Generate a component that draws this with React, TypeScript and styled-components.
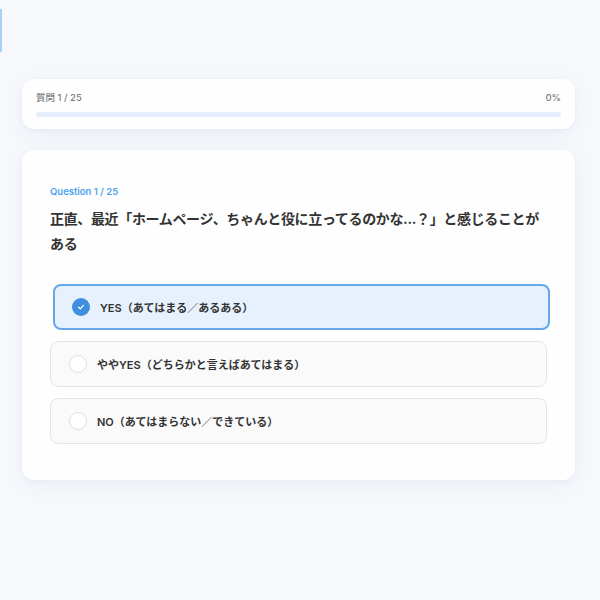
import React from "react";
import styled, { createGlobalStyle } from "styled-components";

const GlobalStyle = createGlobalStyle`
  html, body {
    margin: 0;
    padding: 0;
    background: #f6f8fb;
  }
  body {
    font-family: "Inter", "Noto Sans CJK JP", sans-serif;
    color: #333;
  }
  * { box-sizing: border-box; }
`;

const Page = styled.div`
  width: 600px;
  height: 600px;
  background: #f6f8fb;
  display: flex;
  flex-direction: column;
  overflow: hidden;
`;

const EdgeMark = styled.div`
  width: 2px;
  height: 43px;
  margin-top: 9px;
  background: #a9d1f7;
`;

const Main = styled.main`
  display: flex;
  flex-direction: column;
  gap: 21px;
  width: 553px;
  margin: 27px 0 0 22px;
`;

const Card = styled.section`
  background: #fefefe;
  border-radius: 12px;
  box-shadow: 0 4px 18px rgba(110, 140, 200, 0.1), 0 1px 3px rgba(110, 140, 200, 0.06);
`;

const ProgressCard = styled(Card)`
  height: 50px;
  padding: 13px 14px 0 14px;
  display: flex;
  flex-direction: column;
  gap: 8px;
`;

const ProgressRow = styled.div`
  display: flex;
  justify-content: space-between;
  align-items: center;
  font-size: 9.5px;
  font-weight: 500;
  color: #808080;
  line-height: 12px;
`;

const Track = styled.div`
  height: 5px;
  border-radius: 3px;
  background: #e5effb;
  overflow: hidden;
`;

const Fill = styled.div`
  height: 100%;
  background: #4a9cea;
`;

const QuestionCard = styled(Card)`
  padding: 36px 28px 36px 28px;
  display: flex;
  flex-direction: column;
`;

const Eyebrow = styled.div`
  font-size: 9.5px;
  font-weight: 600;
  color: #4ba3ee;
  line-height: 12px;
  margin-bottom: 8px;
`;

const Title = styled.h2`
  margin: 0 0 28px 0;
  font-size: 14px;
  font-weight: 700;
  line-height: 25px;
  color: #333;
  letter-spacing: -0.35px;
`;

const Options = styled.div`
  display: flex;
  flex-direction: column;
  gap: 11px;
`;

const Option = styled.button<{ $selected?: boolean }>`
  all: unset;
  box-sizing: border-box;
  display: flex;
  align-items: center;
  gap: 10px;
  height: 46px;
  padding: 0 ${(p) => (p.$selected ? "17px" : "18px")};
  border-radius: 8px;
  border: ${(p) => (p.$selected ? "2px solid #64a8ea" : "1.5px solid #e3e4e6")};
  background: ${(p) => (p.$selected ? "#e6f1fd" : "#fafafb")};
  transform: ${(p) => (p.$selected ? "translateX(3px)" : "none")};
  font-family: "Inter", "Noto Sans CJK JP", sans-serif;
  font-size: 11px;
  font-weight: 600;
  color: #333;
  cursor: pointer;
`;

const Radio = styled.span<{ $selected?: boolean }>`
  flex: 0 0 auto;
  width: 18px;
  height: 18px;
  border-radius: 50%;
  display: flex;
  align-items: center;
  justify-content: center;
  background: ${(p) => (p.$selected ? "#3f8fe0" : "#fff")};
  border: ${(p) => (p.$selected ? "none" : "1.5px solid #dedfe1")};
`;

const options = [
  "YES（あてはまる／あるある）",
  "ややYES（どちらかと言えばあてはまる）",
  "NO（あてはまらない／できている）",
];

export default function App() {
  const selected = 0;
  const progress = 0;
  return (
    <Page>
      <GlobalStyle />
      <EdgeMark />
      <Main>
        <ProgressCard>
          <ProgressRow>
            <span>質問 1 / 25</span>
            <span>{progress}%</span>
          </ProgressRow>
          <Track>
            <Fill style={{ width: `${progress}%` }} />
          </Track>
        </ProgressCard>
        <QuestionCard>
          <Eyebrow>Question 1 / 25</Eyebrow>
          <Title>正直、最近「ホームページ、ちゃんと役に立ってるのかな...？」と感じることがある</Title>
          <Options>
            {options.map((o, i) => (
              <Option key={o} $selected={i === selected}>
                <Radio $selected={i === selected}>
                  {i === selected && (
                    <svg width="8" height="8" viewBox="0 0 8 8">
                      <path d="M1.6 4.2 L3.3 5.8 L6.4 2.3" fill="none" stroke="#fff" strokeWidth="1.2" strokeLinecap="round" strokeLinejoin="round" />
                    </svg>
                  )}
                </Radio>
                <span>{o}</span>
              </Option>
            ))}
          </Options>
        </QuestionCard>
      </Main>
    </Page>
  );
}
